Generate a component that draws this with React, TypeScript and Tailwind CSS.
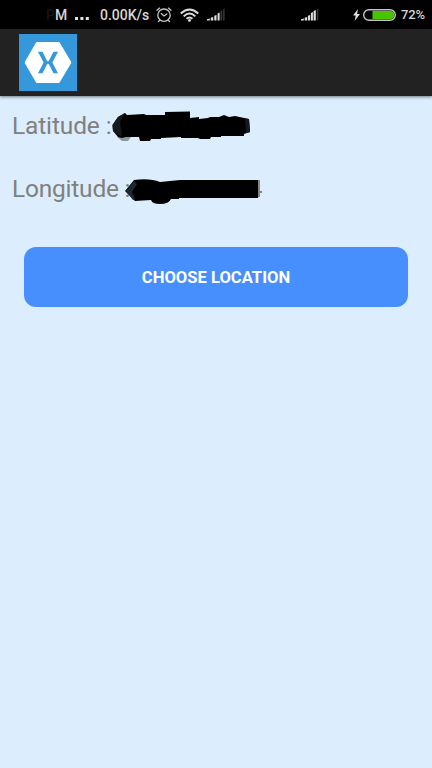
import React from "react";

function StatusBar() {
  return (
    <div className="flex h-[29px] items-center bg-black text-[14px] font-medium leading-none text-[#d6d6d6]">
      <span className="ml-[46px] w-[9px] overflow-hidden text-[#141414]">P</span>
      <span className="w-[12px]">M</span>
      <svg className="ml-[8px] mt-[8px] h-[3px] w-[14px]" viewBox="0 0 14 3" fill="#e2e2e2">
        <rect width="3" height="3" />
        <rect x="5.4" width="3" height="3" />
        <rect x="10.8" width="3" height="3" />
      </svg>
      <span className="ml-[11px] w-[49px] whitespace-nowrap">0.00K/s</span>
      <svg className="ml-[7px] h-[16px] w-[16px]" viewBox="0 0 16 16" fill="none" stroke="#c6c6c6" strokeWidth="1.3" strokeLinecap="round">
        <circle cx="8" cy="8.2" r="6.2" />
        <path d="M5.3 6.6 8 9l2.8-2M1 3.3 3.6 1.1M12.4 1.1 15 3.3M3.8 13.3l-1.4 1.2M12.2 13.3l1.4 1.2" />
      </svg>
      <svg className="ml-[8px] h-[14px] w-[19px]" viewBox="0 0 18 14" preserveAspectRatio="none" fill="none" stroke="#dcdcdc" strokeWidth="1.9">
        <path d="M.7 5.5Q9-2.4 17.3 5.5M3.5 8.3Q9 2.8 14.5 8.3M6.2 10.8Q9 8.3 11.8 10.8" />
        <circle cx="9" cy="12.4" r="1.4" fill="#dcdcdc" stroke="none" />
      </svg>
      <svg className="ml-[8px] h-[13px] w-[18px]" viewBox="0 0 18 13" fill="#dedede">
        <path d="M0 12.5v-1.3l2.8-.8v2.1zM3.8 12.5V9.8l2.4-.9v3.6zM7.3 12.5V7.8l2.2-.9v5.6zM10.6 12.5V5.5l2-.9v7.9z" />
        <path d="M13.5 12.5V3l1.7-.9v10.4zM16.1 12.5V1.2l1.5-.8v12.1z" fill="#383838" />
      </svg>
      <svg className="ml-[76px] h-[13px] w-[18px]" viewBox="0 0 18 13" fill="#dedede">
        <path d="M0 12.5v-1.3l2.8-.8v2.1zM3.7 12.5V9.8l2.4-.9v3.6zM6.9 12.5V7.8L9.1 7v5.5zM9.9 12.5V5l2-.9v8.4zM12.6 12.5V3l2.2-.9v10.4z" />
        <path d="M15.8 12.5V1.2l1.5-.8v12.1z" fill="#383838" />
      </svg>
      <svg className="ml-[34px] h-[12px] w-[7px]" viewBox="0 0 7 12" fill="#e0e0e0">
        <path d="M5 0 0 6.5l2.8-.1L1.6 12 7 5H4.1z" />
      </svg>
      <svg className="ml-[3px] h-[12px] w-[33px]" viewBox="0 0 33 12">
        <rect x=".7" y=".7" width="31.6" height="10.6" rx="5.3" fill="#050505" stroke="#c4c4c4" strokeWidth="1.4" />
        <path d="M9.5 2h17.8a4 4 0 0 1 0 8H9.5z" fill="#48c400" />
      </svg>
      <span className="ml-[5px] text-[13px] tracking-[-0.2px]">72%</span>
    </div>
  );
}

function AppHeader() {
  return (
    <header className="flex h-[67px] items-start bg-[#222222] pl-[19px] pt-[5px] shadow-[0_1px_3px_rgba(0,0,0,0.5)]">
      <svg className="h-[57px] w-[58px]" viewBox="0 0 58 57" fill="none">
        <rect width="58" height="57" fill="#3498db" />
        <path d="M18.2 9.5h21.3L50.8 28.4 39.5 47.4H18.2L7.2 28.4 18.2 9.5z" fill="white" stroke="white" strokeWidth="3" strokeLinejoin="round" />
        <path d="M19 17.8h4.5l4.4 8.6q.3.9 1 1.2.8-.3 1.1-1.2l4.5-8.6H39l-5.6 10.7L39 39.2h-4.5L30 30.6q-.3-.9-1.1-1.2-.7.3-1 1.2l-4.4 8.6H19l5.6-10.7z" fill="#3498db" />
        <path d="M28 28.5h2" stroke="#3498db" strokeWidth="1.8" />
      </svg>
    </header>
  );
}

export default function App() {
  return (
    <div className="flex h-[768px] w-[432px] flex-col bg-[#dceefd] font-['Roboto',sans-serif]">
      <StatusBar />
      <AppHeader />
      <main className="flex flex-col pt-[12px]">
        <div className="flex h-[36px] items-center pl-[12px] text-[24.5px] text-[#808080]">
          <span className="w-[100px] whitespace-nowrap tracking-[-0.14px]">Latitude :</span>
          <svg className="h-[36px] w-[140px]" viewBox="112 108 140 36">
            <path d="M117 137 122 141H128L131 137z" fill="#8d979f" />
            <path d="M112.5 125 118 117 125 113 127 115 144 114 146 115H165V112L190 111.5V118L199 117V119L208 118 210 117 219 117 224 115 229 117 235 116 249 119 250 132 244 134V136L221 136V137H211L210 139H200L198 138H181V137L161 138V139H151L150 141H140L139 137H126L122 138 118 137 113 131z" fill="black" />
            <path d="M112.5 125 118 117 125 113 120 122 122 136 118 135 113 131zM245 118.500 249 119 250 132 246 133z" fill="#15191c" />
          </svg>
        </div>
        <div className="mt-[27px] flex h-[36px] items-center pl-[12px] text-[24.5px] text-[#808080]">
          <span className="w-[113px] whitespace-nowrap tracking-[-0.22px]">Longitude :</span>
          <svg className="h-[36px] w-[140px]" viewBox="125 171 140 36">
            <path d="m125 191 9-11q16-2 26 2l20-2h78v18h-79v1h-8q-2 5-11 5-8 0-9-4l-16 1z" fill="black" />
            <path d="m126 191 8-10 3 3-5 8 3 7-2 1z" fill="#20282f" />
            <path d="M258 180h2v17h-2zM260 191h2v2h-2z" fill="#858585" />
          </svg>
        </div>
        <button className="mx-[24px] mt-[40px] h-[60px] rounded-[12px] bg-[#468ffc] pt-[3px] text-[16.6px] font-bold text-white">
          CHOOSE LOCATION
        </button>
      </main>
    </div>
  );
}
